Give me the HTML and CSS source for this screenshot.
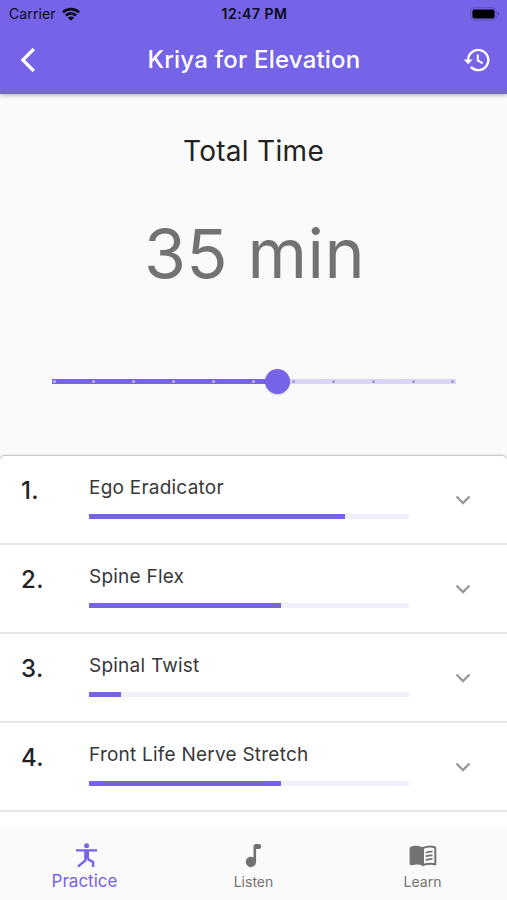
FILE: index.html
```html
<!DOCTYPE html>
<html lang="en">
<head>
    <meta charset="UTF-8">
    <meta name="viewport" content="width=device-width, initial-scale=1.0">
    <title>Kriya for Elevation</title>
    <link rel="stylesheet" href="styles.css">
</head>
<body>

<header class="header">
    <div class="status-bar">
        <div class="carrier">
            <span>Carrier</span>
            <svg width="18" height="14" viewBox="0 0 18 14" fill="none" stroke="#0b0a17" stroke-width="2.7">
                <path d="M0.9 5.4a11.5 11.5 0 0 1 16.2 0"/>
                <path d="M3.9 8.5a7.2 7.2 0 0 1 10.2 0"/>
                <path d="M9 13.8L5.9 10.7a4.4 4.4 0 0 1 6.2 0z" fill="#0b0a17" stroke="none"/>
            </svg>
        </div>
        <span class="clock">12:47 PM</span>
        <svg class="battery" width="30" height="14" viewBox="0 0 30 14">
            <rect x="0.7" y="0.7" width="25.6" height="12.6" rx="3.6" fill="none" stroke="#5f51bd"/>
            <rect x="2.4" y="2.4" width="22.2" height="9.2" rx="2" fill="#000"/>
            <path d="M27.7 4.8c2 .8 2 3.6 0 4.4z" fill="#5144a5"/>
        </svg>
    </div>
    <div class="title-bar">
        <svg width="16" height="26" viewBox="0 0 16 26" fill="none" stroke="#fff" stroke-width="3.2">
            <path d="M13.8 2L2.8 13l11 11"/>
        </svg>
        <h1 class="title">Kriya for Elevation</h1>
        <svg width="27" height="26" viewBox="0 0 27 26" fill="none" stroke="#fff" stroke-width="2.3">
            <path d="M5.1 13a10.1 10.1 0 1 1 2.7 6.9"/>
            <path d="M14.8 7.6v5.8l4.8 2.9" stroke-width="2"/>
            <path d="M0.6 12.6h9.2l-4.6 4.7z" fill="#fff" stroke="none"/>
        </svg>
    </div>
</header>

<section class="time">
    <h2 class="time-label">Total Time</h2>
    <div class="time-value">35 min</div>
    <div class="slider">
        <div class="slider-fill"></div>
        <div class="ticks">
            <i></i><i></i><i></i><i></i><i></i><i></i>
            <i class="off"></i><i class="off"></i><i class="off"></i><i class="off"></i><i class="off"></i>
        </div>
        <div class="thumb"></div>
    </div>
</section>

<main class="list">
    <div class="item">
        <span class="number">1.</span>
        <div class="exercise">
            <div class="name">Ego Eradicator</div>
            <div class="bar"><div class="bar-fill" style="width: 80%"></div></div>
        </div>
        <svg class="chevron" width="16" height="10" viewBox="0 0 16 10"><path d="M1.5 1.5L8 8l6.5-6.5"/></svg>
    </div>
    <div class="item">
        <span class="number">2.</span>
        <div class="exercise">
            <div class="name">Spine Flex</div>
            <div class="bar"><div class="bar-fill" style="width: 60%"></div></div>
        </div>
        <svg class="chevron" width="16" height="10" viewBox="0 0 16 10"><path d="M1.5 1.5L8 8l6.5-6.5"/></svg>
    </div>
    <div class="item">
        <span class="number">3.</span>
        <div class="exercise">
            <div class="name">Spinal Twist</div>
            <div class="bar"><div class="bar-fill" style="width: 10%"></div></div>
        </div>
        <svg class="chevron" width="16" height="10" viewBox="0 0 16 10"><path d="M1.5 1.5L8 8l6.5-6.5"/></svg>
    </div>
    <div class="item">
        <span class="number">4.</span>
        <div class="exercise">
            <div class="name">Front Life Nerve Stretch</div>
            <div class="bar"><div class="bar-fill" style="width: 60%"></div></div>
        </div>
        <svg class="chevron" width="16" height="10" viewBox="0 0 16 10"><path d="M1.5 1.5L8 8l6.5-6.5"/></svg>
    </div>
</main>

<nav class="tabs">
    <div class="tab active">
        <div class="icon">
            <svg width="24" height="26" viewBox="0 0 24 26">
                <circle cx="13.6" cy="2.8" r="2.5" fill="currentColor"/>
                <path d="M3 6.2h21v2.4h-8v6.6h-4.8V8.6H3z" fill="currentColor"/>
                <path d="M12.4 14.5v3L5 23.7M14.5 14.6l1.4 2.2 4.2 2.2v5" fill="none" stroke="currentColor" stroke-width="2.4"/>
            </svg>
        </div>
        <span>Practice</span>
    </div>
    <div class="tab">
        <div class="icon">
            <svg width="31" height="31" viewBox="0 0 24 24">
                <path d="M12 5v8.55c-.94-.54-2.1-.75-3.33-.32-1.34.48-2.37 1.67-2.61 3.07a4 4 0 0 0 4.59 4.65c1.96-.31 3.35-2.11 3.35-4.1V7h2c1.1 0 2-.9 2-2s-.9-2-2-2h-2c-1.1 0-2 .9-2 2z" fill="currentColor"/>
            </svg>
        </div>
        <span>Listen</span>
    </div>
    <div class="tab">
        <div class="icon">
            <svg width="28" height="22" viewBox="0 0 28 22" fill="none" stroke="currentColor">
                <path d="M14 2.3C10.5.4 4.5.2 2.2 1.4Q.6 2 .6 3.5v15q0 2.2 2.4 1.7 6-1.4 11 .6z" fill="currentColor" stroke="none"/>
                <path d="M14 3Q19.5.7 25 1.9q1.3.3 1.3 1.5v15.8Q20 17.8 14 20z" stroke-width="2"/>
                <path d="M16.7 7.7q3.3-1.3 6.8-1M16.700 11.4q3.3-1.3 6.8-1M16.7 15.1q3.3-1.3 6.8-1" stroke-width="1.7"/>
            </svg>
        </div>
        <span>Learn</span>
    </div>
</nav>

</body>
</html>
```

FILE: styles.css
```css
:root {
    --purple: #7563e8;
    --gray: #727272;
    --background: #fafafa;
}

* {
    box-sizing: border-box;
}

body {
    display: flex;
    flex-direction: column;
    height: 900px;
    margin: 0;
    overflow: hidden;
    background: var(--background);
    font-family: Inter, sans-serif;
    color: #222;
}

svg {
    display: block;
    flex: none;
}

.header {
    height: 94px;
    background: var(--purple);
    box-shadow: 0 1px 4px rgba(0, 0, 0, 0.35);
}

.status-bar {
    display: grid;
    grid-template-columns: 1fr auto 1fr;
    align-items: center;
    height: 27px;
    padding: 0 7px 0 9px;
    font-size: 14px;
    color: #0b0a17;
}

.carrier {
    display: flex;
    align-items: center;
    gap: 6px;
    letter-spacing: 0.1px;
}

.clock {
    font-weight: 600;
    letter-spacing: 0.5px;
}

.battery {
    justify-self: end;
}

.title-bar {
    display: grid;
    grid-template-columns: 1fr auto 1fr;
    align-items: center;
    height: 66px;
    padding: 0 17px 0 20px;
}

.title-bar svg:last-child {
    justify-self: end;
}

.title {
    margin: -1px 2px 0 0;
    font-size: 24px;
    font-weight: 500;
    letter-spacing: 0.2px;
    color: #fff;
}

.time {
    display: flex;
    flex-direction: column;
    align-items: center;
    height: 362px;
    padding-top: 38px;
}

.time-label {
    margin: 0;
    font-size: 28px;
    line-height: 38px;
    font-weight: 400;
    letter-spacing: 0.3px;
}

.time-value {
    margin-top: 43px;
    padding-left: 2px;
    font-size: 68px;
    line-height: 80px;
    letter-spacing: 0.4px;
    color: var(--gray);
}

.slider {
    position: relative;
    width: 404px;
    height: 5px;
    margin-top: 86px;
    background: #dcd6f7;
}

.slider-fill {
    width: 226px;
    height: 5px;
    background: var(--purple);
}

.ticks {
    position: absolute;
    top: 1px;
    left: 1px;
    display: flex;
    justify-content: space-between;
    width: 402px;
}

.ticks i {
    width: 3px;
    height: 3px;
    border-radius: 50%;
    background: #c3bbf5;
}

.ticks .off {
    background: #a599d6;
}

.thumb {
    position: absolute;
    top: -10px;
    left: 213px;
    width: 25px;
    height: 25px;
    border-radius: 50%;
    background: var(--purple);
    box-shadow: 0 1px 2px rgba(0, 0, 0, 0.2);
}

.list {
    flex: 1;
    background: #fff;
    border-radius: 5px 5px 0 0;
    box-shadow: 0 -1px 2px rgba(0, 0, 0, 0.25);
}

.item {
    display: flex;
    height: 89.1px;
    padding: 0 36px 0 21px;
    border-bottom: 2px solid #e8e8e8;
}

.number {
    width: 68px;
    padding-top: 18px;
    font-size: 24px;
    line-height: 33px;
    font-weight: 500;
    letter-spacing: 0.4px;
}

.exercise {
    width: 320px;
    padding-top: 19px;
}

.name {
    font-size: 19px;
    line-height: 26px;
    letter-spacing: 0.23px;
    color: #383838;
}

.bar {
    height: 5px;
    margin-top: 13px;
    background: #f1eefd;
}

.bar-fill {
    height: 5px;
    background: var(--purple);
}

.chevron {
    margin: 38.5px 0 0 auto;
    fill: none;
    stroke: #999;
    stroke-width: 2.4;
}

.tabs {
    display: grid;
    grid-template-columns: repeat(3, 1fr);
    height: 72px;
    background: var(--background);
}

.tab {
    display: flex;
    flex-direction: column;
    align-items: center;
    padding-top: 12px;
    font-size: 14px;
    line-height: 20px;
    color: var(--gray);
}

.tab span {
    padding-top: 1px;
}

.icon {
    display: flex;
    align-items: center;
    height: 31px;
}

.active {
    font-size: 17px;
    color: var(--purple);
}

.active span {
    padding-top: 0;
}
```
